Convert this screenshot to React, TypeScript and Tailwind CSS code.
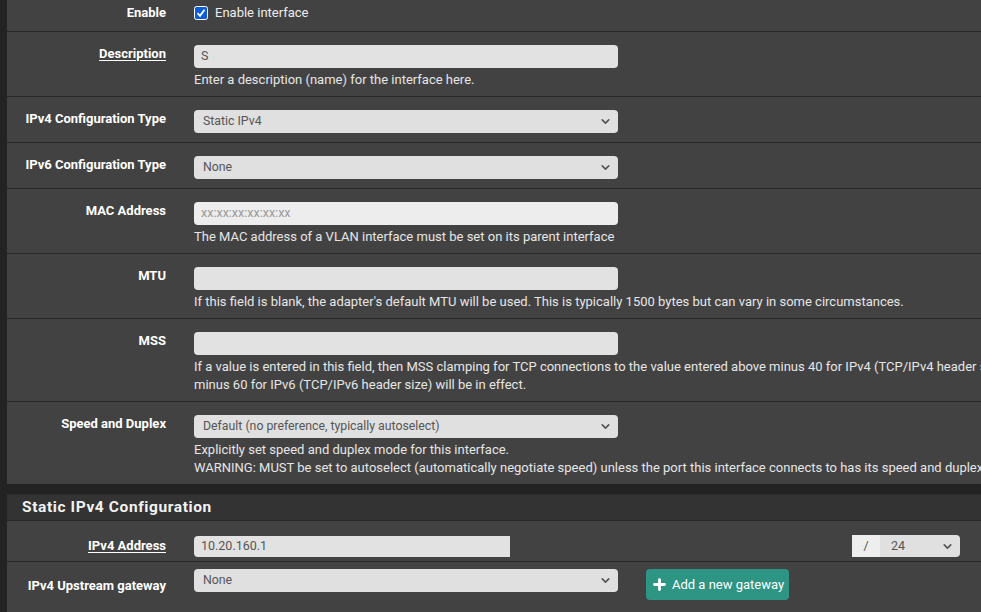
import React from "react";
import { ChevronDown, Plus } from "lucide-react";

const font = { fontFamily: "Roboto, 'Liberation Sans', sans-serif" };

function Label({ children, underline = false }: { children: React.ReactNode; underline?: boolean }) {
  return (
    <div className="w-[173px] shrink-0 pr-[14px] text-right text-[13px] font-bold leading-[18px] text-white whitespace-nowrap">
      <span className={underline ? "underline underline-offset-2" : ""}>{children}</span>
    </div>
  );
}

function Select({ value, w = "w-[424px]" }: { value: string; w?: string }) {
  return (
    <div className={`${w} h-[23px] rounded-[4px] bg-[#e0e0e0] flex items-center justify-between pl-[9px] pr-[6px] text-[12.3px] text-[#555]`}>
      <span>{value}</span>
      <ChevronDown size={13} strokeWidth={3} className="text-[#555]" />
    </div>
  );
}

function Input({ value = "", placeholder = "", bg = "bg-[#e2e2e2]" }: { value?: string; placeholder?: string; bg?: string }) {
  return (
    <div className={`w-[424px] h-[23px] rounded-[4px] ${bg} flex items-center pl-[7px] text-[12.5px] text-[#555]`}>
      {value ? <span>{value}</span> : <span className="text-[#9a9a9a] text-[12.5px]">{placeholder}</span>}
    </div>
  );
}

function Help({ children }: { children: React.ReactNode }) {
  return <div className="mt-[3px] text-[13px] leading-[18px] text-[#e6e6e6] whitespace-nowrap">{children}</div>;
}

function Row({ label, underline, children, last = false }: { label: string; underline?: boolean; children: React.ReactNode; last?: boolean }) {
  return (
    <div className={`flex pt-[13px] pb-[7px] ${last ? "" : "border-b border-[#282828]"}`}>
      <Label underline={underline}>{label}</Label>
      <div className="pl-[14px]">{children}</div>
    </div>
  );
}

export default function App() {
  return (
    <div style={font} className="w-[981px] h-[612px] overflow-hidden bg-[#232323] pl-[7px]">
      <div className="w-[1100px] bg-[#424242]">
        {/* Enable */}
        <div className="flex pt-[4px] pb-[9px] border-b border-[#282828]">
          <Label>Enable</Label>
          <div className="pl-[14px] flex items-center h-[18px] gap-[7px]">
            <svg width="14" height="14" viewBox="0 0 14 14">
              <rect x="0.5" y="0.5" width="13" height="13" rx="2" fill="#0d5bd7" stroke="#ffffff" />
              <path d="M3.5 7.2 L6 9.8 L10.5 3.8" stroke="#ffffff" strokeWidth="1.8" fill="none" />
            </svg>
            <span className="text-[13px] text-[#eeeeee]">Enable interface</span>
          </div>
        </div>

        <Row label="Description" underline>
          <Input value="S" />
          <Help>Enter a description (name) for the interface here.</Help>
        </Row>

        <div className="flex pt-[13px] pb-[9px] border-b border-[#282828]">
          <Label>IPv4 Configuration Type</Label>
          <div className="pl-[14px]"><Select value="Static IPv4" /></div>
        </div>

        <div className="flex pt-[13px] pb-[9px] border-b border-[#282828]">
          <Label>IPv6 Configuration Type</Label>
          <div className="pl-[14px]"><Select value="None" /></div>
        </div>

        <Row label="MAC Address">
          <Input placeholder="xx:xx:xx:xx:xx:xx" bg="bg-[#ededed]" />
          <Help>The MAC address of a VLAN interface must be set on its parent interface</Help>
        </Row>

        <Row label="MTU">
          <Input />
          <Help>If this field is blank, the adapter's default MTU will be used. This is typically 1500 bytes but can vary in some circumstances.</Help>
        </Row>

        <Row label="MSS">
          <Input />
          <Help>
            If a value is entered in this field, then MSS clamping for TCP connections to the value entered above minus 40 for IPv4 (TCP/IPv4 header size) and
            <br />
            minus 60 for IPv6 (TCP/IPv6 header size) will be in effect.
          </Help>
        </Row>

        <Row label="Speed and Duplex" last>
          <Select value="Default (no preference, typically autoselect)" />
          <Help>
            Explicitly set speed and duplex mode for this interface.
            <br />
            WARNING: MUST be set to autoselect (automatically negotiate speed) unless the port this interface connects to has its speed and duplex forced.
          </Help>
        </Row>
      </div>

      <div className="h-[10px]" />

      <div className="w-[1100px] bg-[#424242] border-t border-[#2c2c2c]">
        <div className="h-[26px] bg-[#333333] border-b border-[#282828] flex items-center pl-[15px]">
          <span className="text-[15.5px] font-bold tracking-[0.6px] text-[#f2f2f2]">Static IPv4 Configuration</span>
        </div>

        <div className="flex items-center pt-[14px] pb-[4px] border-b border-[#282828]">
          <Label underline>IPv4 Address</Label>
          <div className="pl-[14px] flex items-center">
            <div className="w-[316px] h-[21px] rounded-l-[4px] bg-[#e2e2e2] flex items-center pl-[7px] text-[12.5px] text-[#555]">10.20.160.1</div>
            <div className="ml-[342px] w-[28px] h-[22px] bg-[#eeeeee] flex items-center justify-center text-[12.5px] text-[#555]">/</div>
            <div className="w-[80px] h-[22px] rounded-r-[4px] bg-[#e0e0e0] flex items-center justify-between pl-[11px] pr-[6px] text-[12.5px] text-[#555]">
              <span>24</span>
              <ChevronDown size={13} strokeWidth={3} className="text-[#555]" />
            </div>
          </div>
        </div>

        <div className="flex pt-[7px] pb-[20px]">
          <div className="pt-[8px]"><Label>IPv4 Upstream gateway</Label></div>
          <div className="pl-[14px] flex items-start">
            <Select value="None" />
            <div className="ml-[28px] h-[31px] w-[143px] rounded-[4px] bg-[#2e9484] flex items-center gap-[4px] pl-[5px] text-[13px] text-white">
              <Plus size={17} strokeWidth={4} />
              <span>Add a new gateway</span>
            </div>
          </div>
        </div>
      </div>
    </div>
  );
}
